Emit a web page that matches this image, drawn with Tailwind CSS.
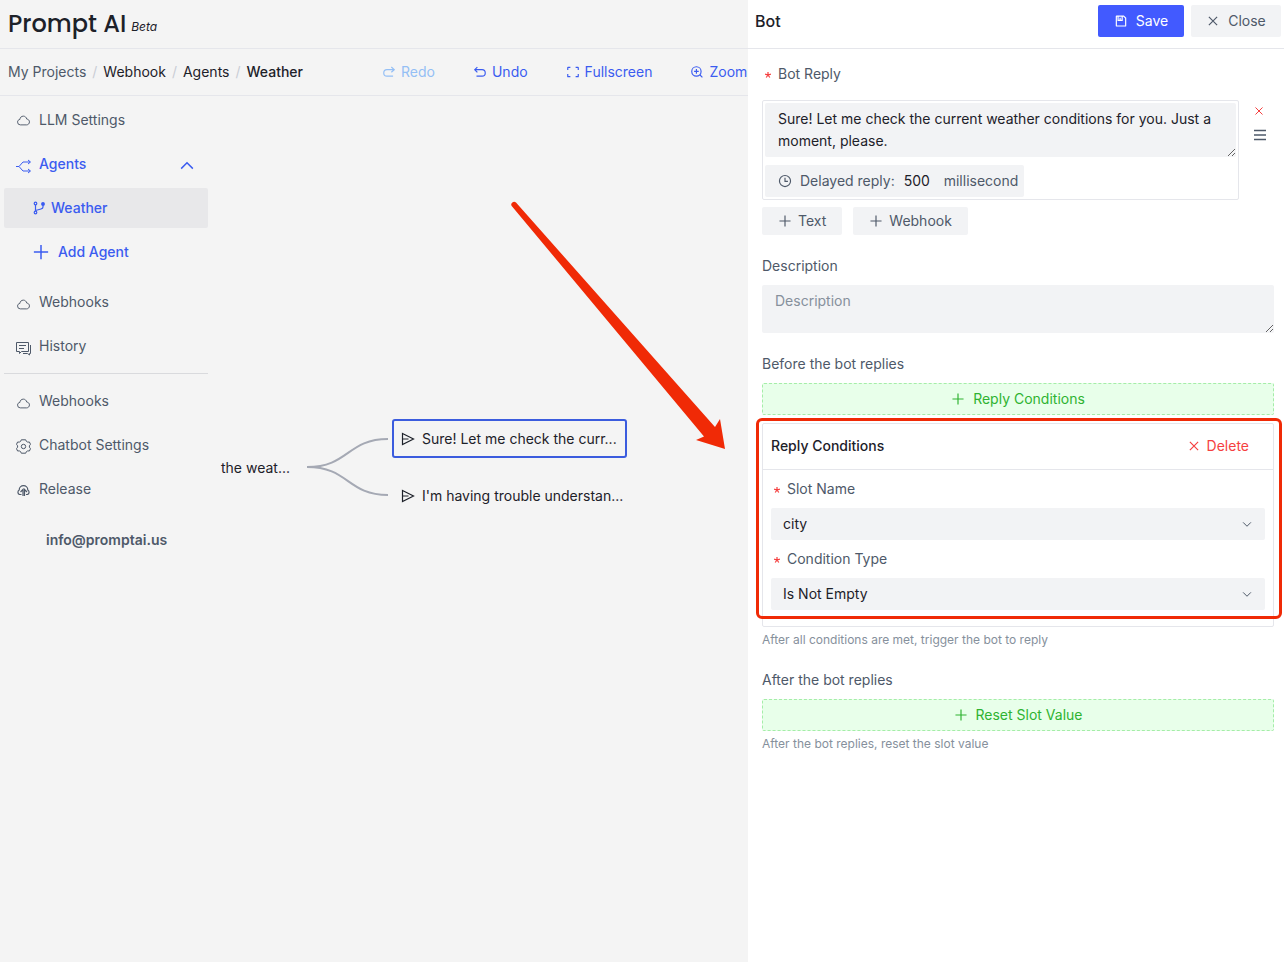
<!DOCTYPE html>
<html lang="en">
<head>
<meta charset="utf-8">
<title>Prompt AI</title>
<script src="https://cdn.jsdelivr.net/npm/@tailwindcss/browser@4"></script>
</head>
<body class="font-['Inter',sans-serif] text-sm leading-[22px] text-[#4e5969] bg-[#f4f4f4]">
<svg class="hidden" aria-hidden="true">
  <symbol id="plus" viewBox="0 0 48 48"><path d="M5 24h38M24 5v38" fill="none" stroke="currentColor" stroke-width="4"/></symbol>
  <symbol id="close" viewBox="0 0 48 48"><path d="M9.9 9.9 38.1 38.1M38.1 9.9 9.9 38.1" fill="none" stroke="currentColor" stroke-width="4"/></symbol>
  <symbol id="down" viewBox="0 0 48 48"><path d="M39.6 17.4 24 33 8.4 17.4" fill="none" stroke="currentColor" stroke-width="4"/></symbol>
  <symbol id="cloud" viewBox="0 0 48 48"><path d="M5 29a9 9 0 0 0 9 9h20c5 0 9-4 9-9.500s-4-8.500-8.500-9C33 13.500 28.500 10 23.500 10 17 10 12.500 15 12.500 20.500 8 21 5 24.500 5 29Z" fill="none" stroke="currentColor" stroke-width="3" stroke-linejoin="round"/></symbol>
  <symbol id="send" viewBox="0 0 14 14"><path d="M1.500 1.500 12.500 7l-11 5.500ZM1.500 7h6" fill="none" stroke="currentColor" stroke-width="1.200"/></symbol>
  <symbol id="required" viewBox="0 0 8 8"><path d="M4 4V1M4 4 1.100 3.100M4 4l2.900-.9M4 4 2.200 6.500M4 4l1.800 2.500" fill="none" stroke="currentColor" stroke-width="1.200"/></symbol>
</svg>
<div class="flex min-h-screen">
  <div class="flex min-w-0 flex-1 flex-col">
    <header class="flex h-[49px] items-center gap-[5px] border-b border-[#e5e6eb] px-2 text-[#1d2129]">
      <h1 class="font-['Poppins','Inter',sans-serif] text-2xl font-medium">Prompt AI</h1>
      <em class="pt-[6px] text-xs">Beta</em>
    </header>
    <div class="flex h-[47px] items-center overflow-hidden border-b border-[#e5e6eb] whitespace-nowrap">
      <nav aria-label="Breadcrumb" class="flex w-[370px] shrink-0 gap-[6px] pl-2 text-[#1d2129]">
        <a href="#" class="text-[#4e5969]">My Projects</a><span class="text-[#c9cdd4]">/</span>
        <a href="#">Webhook</a><span class="text-[#c9cdd4]">/</span>
        <a href="#">Agents</a><span class="text-[#c9cdd4]">/</span>
        <span class="font-medium">Weather</span>
      </nav>
      <div class="flex gap-[38px] pl-3 text-[#3b5cf0]">
        <button disabled class="flex shrink-0 items-center gap-[5px] text-[#94bff5]"><svg class="size-[14px]" viewBox="0 0 48 48" fill="none" stroke="currentColor" stroke-width="4"><path d="M32 7l10 9-10 9M42 16H17a11 11 0 0 0 0 22h21"/></svg>Redo</button>
        <button class="flex shrink-0 items-center gap-[5px]"><svg class="size-[14px]" viewBox="0 0 48 48" fill="none" stroke="currentColor" stroke-width="4"><path d="M15 7 6 16l9 9M6 16h25a11 11 0 0 1 0 22H12"/></svg>Undo</button>
        <button class="flex shrink-0 items-center gap-[5px]"><svg class="size-[14px]" viewBox="0 0 48 48" fill="none" stroke="currentColor" stroke-width="4"><path d="M42 17V9a1 1 0 0 0-1-1h-8M6 17V9a1 1 0 0 1 1-1h8M42 31v8a1 1 0 0 1-1 1h-8M6 31v8a1 1 0 0 0 1 1h8"/></svg>Fullscreen</button>
        <button class="flex shrink-0 items-center gap-[5px]"><svg class="size-[14px]" viewBox="0 0 48 48" fill="none" stroke="currentColor" stroke-width="4"><circle cx="22" cy="22" r="16"/><path d="m33.500 33.500 9 9M22 14v16M14 22h16"/></svg>Zoom</button>
      </div>
    </div>
    <div class="flex flex-1">
      <aside class="w-[212px] shrink-0 px-1 pt-1">
        <nav aria-label="Main" class="flex flex-col gap-1">
          <a href="#" class="flex h-10 items-center gap-2 pl-3"><svg class="size-[15px]"><use href="#cloud"/></svg>LLM Settings</a>
          <button class="flex h-10 items-center gap-2 pr-[14px] pl-3 font-medium text-[#3b5cf0]"><svg class="mt-1 size-[15px]" viewBox="0 0 15 15" fill="none" stroke="currentColor"><path d="M0 7.500h3L7 3h7M3 7.500 7 12h7M12 1l2.500 2L12 5M12 10l2.500 2L12 14"/></svg><span class="flex-1 text-left">Agents</span><svg class="mt-1 size-[14px] rotate-180" viewBox="0 0 48 48" fill="none" stroke="currentColor" stroke-width="5"><path d="M44 15 24 35 4 15"/></svg></button>
          <a href="#" class="flex h-10 items-center gap-[5px] rounded-xs bg-[#e8e8ea] pl-7 font-medium text-[#3b5cf0]"><svg class="size-[14px]" viewBox="0 0 14 14" fill="none" stroke="currentColor" stroke-width="1.200"><circle cx="3.500" cy="2.500" r="1.300"/><circle cx="3.500" cy="11.500" r="1.300"/><circle cx="11" cy="3" r="1.300" fill="currentColor"/><path d="M3.500 4v6M11 4.500v1.500q0 1.500-2 2L3.500 9.500"/></svg>Weather</a>
          <button class="flex h-10 items-center gap-2 pl-7 font-medium text-[#3b5cf0]"><svg class="size-[18px]"><use href="#plus"/></svg>Add Agent</button>
          <a href="#" class="mt-[6px] flex h-10 items-center gap-2 pl-3"><svg class="mt-1 size-[15px]"><use href="#cloud"/></svg>Webhooks</a>
          <a href="#" class="flex h-10 items-center gap-2 pl-3"><svg class="mt-1 size-[15px]" viewBox="0 0 15 15" fill="none" stroke="currentColor"><path d="M.5 1.500h12v9h-7l-2 2v-2h-3ZM3 4.500h7M3 7.500h5M14.500 4v8.500h-1v1.500l-2-1.500H7"/></svg>History</a>
        </nav>
        <hr class="mt-[7px] mb-[7px] border-[#d9dadd]">
        <nav aria-label="Project" class="flex flex-col gap-1">
          <a href="#" class="flex h-10 items-center gap-2 pl-3"><svg class="mt-1 size-[15px]"><use href="#cloud"/></svg>Webhooks</a>
          <a href="#" class="flex h-10 items-center gap-2 pl-3"><svg class="mt-[2px] size-[15px]" viewBox="0 0 15 15" fill="none" stroke="currentColor"><path d="M5.300.8h4.400l.7 1.600 1.300.7 1.700-.1 1.100 2.300-1.100 1.500v1.400l1.100 1.500-1.100 2.300-1.700-.1-1.300.7-.7 1.600H5.300l-.7-1.600-1.300-.7-1.700.1L.5 9.700l1.100-1.500V6.800L.5 5.300 1.600 3l1.700.1 1.300-.7Z"/><circle cx="7.500" cy="7.500" r="2.200"/></svg>Chatbot Settings</a>
          <a href="#" class="flex h-10 items-center gap-2 pl-3"><svg class="mt-[2px] size-[15px]" viewBox="0 0 15 15" fill="none" stroke="currentColor" stroke-width="1.200"><path d="M5.500 11.500H3.500A2.500 2.500 0 0 1 3.200 7a4.300 4.300 0 0 1 8.600 0 2.500 2.500 0 0 1-.3 4.500H10M4.500 9 7 6.500V13M8.500 13V6.500L11 9"/></svg>Release</a>
        </nav>
        <a href="mailto:info@promptai.us" class="mt-5 block pl-[42px] font-semibold">info@promptai.us</a>
      </aside>
      <main class="relative flex-1 text-[#1d2129]">
        <div class="absolute top-[361px] left-[9px]">the weat...</div>
        <svg class="absolute top-[336px] left-[94px] h-[70px] w-[84px]" viewBox="0 0 84 70" fill="none" stroke="#a5a9b4" stroke-width="2"><path d="M1 35C43 35 41 7 82 7M1 35C43 35 41 63 82 63"/></svg>
        <div class="absolute top-[323px] left-[180px] flex h-[39px] w-[235px] items-center gap-[7px] rounded-[3px] border-2 border-[#3b5cde] pl-[7px] whitespace-nowrap"><svg class="size-[14px]"><use href="#send"/></svg>Sure! Let me check the curr...</div>
        <div class="absolute top-[380px] left-[180px] flex h-[39px] w-[235px] items-center gap-[7px] pl-[9px] whitespace-nowrap"><svg class="size-[14px]"><use href="#send"/></svg>I'm having trouble understan...</div>
        <svg class="absolute top-[104px] left-[298px] h-[252px] w-[218px]" viewBox="510 200 218 252" fill="#f02a06"><path d="M516 202.500a2.800 2.800 0 0 0-4.300 3.500L704 436.500l-8 3.500 29 9-5-30-5 8Z"/></svg>
      </main>
    </div>
  </div>

  <section aria-label="Bot" class="w-[536px] shrink-0 bg-white">
    <header class="flex h-[49px] items-center gap-[7px] border-b border-[#e5e6eb] pr-[3px] pb-[6px] pl-[7px]">
      <h2 class="flex-1 text-base font-medium text-[#1d2129]">Bot</h2>
      <button class="flex h-8 w-[86px] items-center justify-center gap-2 rounded-xs bg-[#425aff] text-white"><svg class="size-[14px]" viewBox="0 0 48 48" fill="none" stroke="currentColor" stroke-width="4"><path d="M21 13v9m12-15H9a1 1 0 0 0-1 1v32a1 1 0 0 0 1 1h30a1 1 0 0 0 1-1V14ZM14 7v15h14V7"/></svg>Save</button>
      <button class="flex h-8 w-[90px] items-center justify-center gap-2 rounded-xs bg-[#f2f3f5]"><svg class="size-[14px]"><use href="#close"/></svg>Close</button>
    </header>
    <form class="pr-[10px] pl-[14px]">
      <label for="reply" class="mt-[14px] flex items-center gap-[6px] pl-[2px]"><svg class="mt-[2px] size-2 text-[#f53f3f]"><use href="#required"/></svg>Bot Reply</label>
      <div class="mt-[15px] flex gap-[14px]">
        <div class="flex flex-1 flex-col items-start rounded-xs border border-[#e5e6eb] p-[2px]">
          <textarea id="reply" class="h-[54px] w-full rounded-xs bg-[#f2f3f5] px-[13px] py-[5px] text-[#1d2129]">Sure! Let me check the current weather conditions for you. Just a moment, please.</textarea>
          <label class="mt-2 flex h-8 items-center rounded-xs bg-[#f2f3f5] pr-[6px] pl-[13px]"><svg class="mr-2 size-[14px]" viewBox="0 0 48 48" fill="none" stroke="currentColor" stroke-width="4"><circle cx="24" cy="24" r="19"/><path d="M24 13v12h10"/></svg>Delayed reply:<input value="500" class="mr-1 ml-[9px] w-9 text-[#1d2129]">millisecond</label>
        </div>
        <div class="flex w-[21px] flex-col gap-[11px] pt-[5px]">
          <button type="button" aria-label="Remove reply"><svg class="size-3 text-[#f53f3f]"><use href="#close"/></svg></button>
          <button type="button" aria-label="Reorder"><svg class="size-[14px]" viewBox="0 0 14 14" stroke="currentColor" stroke-width="1.400"><path d="M1 2.500h12M1 7h12M1 11.500h12"/></svg></button>
        </div>
      </div>
      <div class="mt-[7px] flex gap-[11px]">
        <button type="button" class="flex h-7 items-center gap-[6px] rounded-xs bg-[#f2f3f5] px-4"><svg class="size-[14px]"><use href="#plus"/></svg>Text</button>
        <button type="button" class="flex h-7 items-center gap-[6px] rounded-xs bg-[#f2f3f5] px-4"><svg class="size-[14px]"><use href="#plus"/></svg>Webhook</button>
      </div>
      <label for="desc" class="mt-5 block">Description</label>
      <textarea id="desc" placeholder="Description" class="mt-2 block h-12 w-full rounded-xs bg-[#f2f3f5] px-[13px] py-[5px] placeholder:text-[#86909c]"></textarea>
      <h3 class="mt-5">Before the bot replies</h3>
      <button type="button" class="mt-2 flex h-8 w-full items-center justify-center gap-2 rounded-xs border border-dashed border-[#a5eda8] bg-[#e8ffea] text-[#2fb331]"><svg class="size-[14px]"><use href="#plus"/></svg>Reply Conditions</button>
      <div class="relative mt-2 rounded-xs border border-[#e5e6eb]">
        <div class="pointer-events-none absolute -top-[6px] -right-[9px] -left-[7px] h-[201px] rounded-md border-3 border-[#f02a06]"></div>
        <div class="flex h-[46px] items-center justify-between border-b border-[#e5e6eb] pr-6 pb-[2px] pl-2">
          <h4 class="font-medium text-[#1d2129]">Reply Conditions</h4>
          <button type="button" class="flex items-center gap-[6px] text-[#f53f3f]"><svg class="size-[14px]"><use href="#close"/></svg>Delete</button>
        </div>
        <div class="px-2 pt-2 pb-4">
          <label for="slot" class="flex items-center gap-[6px] pl-[2px]"><svg class="mt-[2px] size-2 text-[#f53f3f]"><use href="#required"/></svg>Slot Name</label>
          <div class="relative mt-2">
            <select id="slot" class="h-8 w-full appearance-none rounded-xs bg-[#f2f3f5] px-3 text-[#1d2129]"><option>city</option></select>
            <svg class="pointer-events-none absolute top-[10px] right-3 size-3"><use href="#down"/></svg>
          </div>
          <label for="type" class="mt-2 flex items-center gap-[6px] pl-[2px]"><svg class="mt-[2px] size-2 text-[#f53f3f]"><use href="#required"/></svg>Condition Type</label>
          <div class="relative mt-2">
            <select id="type" class="h-8 w-full appearance-none rounded-xs bg-[#f2f3f5] px-3 text-[#1d2129]"><option>Is Not Empty</option></select>
            <svg class="pointer-events-none absolute top-[10px] right-3 size-3"><use href="#down"/></svg>
          </div>
        </div>
      </div>
      <p class="mt-[2px] text-xs leading-[22px] text-[#86909c]">After all conditions are met, trigger the bot to reply</p>
      <h3 class="mt-[18px]">After the bot replies</h3>
      <button type="button" class="mt-2 flex h-8 w-full items-center justify-center gap-2 rounded-xs border border-dashed border-[#a5eda8] bg-[#e8ffea] text-[#2fb331]"><svg class="size-[14px]"><use href="#plus"/></svg>Reset Slot Value</button>
      <p class="mt-[2px] text-xs leading-[22px] text-[#86909c]">After the bot replies, reset the slot value</p>
    </form>
  </section>
</div>
</body>
</html>
